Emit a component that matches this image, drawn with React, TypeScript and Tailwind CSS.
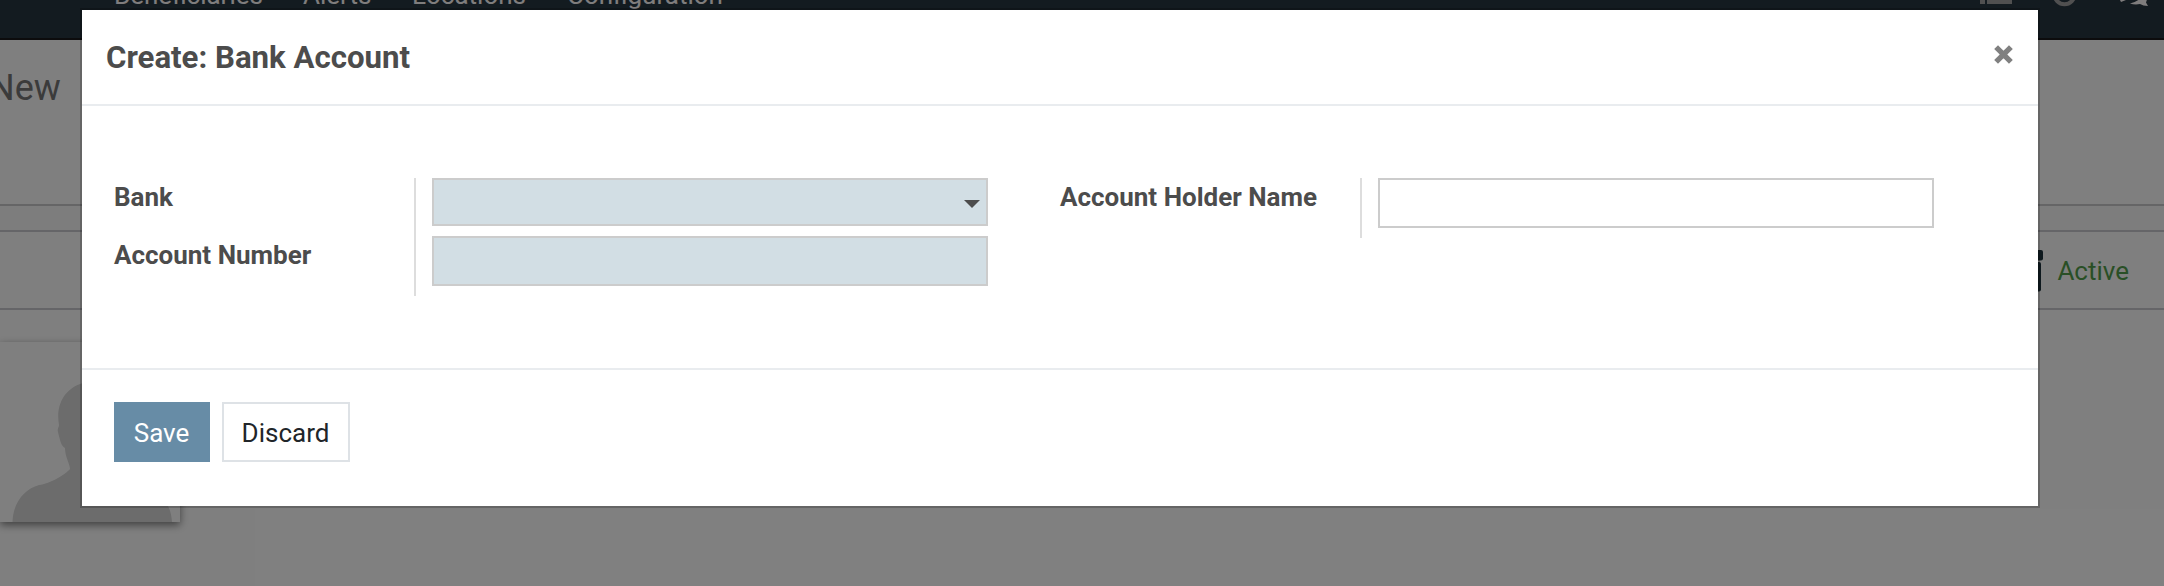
import type { ReactNode } from "react";

const menu = [
  { label: "Beneficiaries", cls: "w-[189px]" },
  { label: "Alerts", cls: "w-[109px]" },
  { label: "Locations", cls: "w-[155px]" },
  { label: "Configuration", cls: "w-[170px]" },
];

function NavBar() {
  return (
    <nav className="flex h-10 shrink-0 items-start justify-between border-b-2 border-[#18191b] bg-[#263640] pl-[114px] text-[26px] leading-[30px] text-[#fffafa]">
      <div className="-mt-5 flex">
        {menu.map((m) => (
          <span key={m.label} className={m.cls}>{m.label}</span>
        ))}
      </div>
      <svg className="h-10 w-[194px] shrink-0" viewBox="0 0 194 40">
        <path d="M10 0h5v4h-5zM17 0h25v4H17z" fill="#a0a0a0" />
        <circle cx="94.5" cy="-6" r="10.2" fill="none" stroke="#a0a0a0" strokeWidth="4" />
        <path d="M150 0h6l-5 2zM160 3.5q5-1 9-4h8l-1 3 2 3.5q-5 0-8-2-5 1-10-.5z" fill="#fffafa" />
      </svg>
    </nav>
  );
}

function Background() {
  return (
    <div className="flex h-full flex-col overflow-hidden bg-white">
      <NavBar />
      <div className="h-[166px] shrink-0 overflow-hidden border-b-2 border-[#cacacc] pt-[27px] text-[36px] leading-[42px] text-[#777777]">
        <div className="-ml-[11px]">New</div>
      </div>
      <div className="h-6 shrink-0 bg-[#fafafa]" />
      <div className="flex h-20 shrink-0 items-center justify-end border-y-2 border-[#cacad0] pt-0.5 pr-[35px]">
        <svg className="mr-[14px] h-[42px] w-[46px]" viewBox="0 0 46 42">
          <rect x="0" y="0" width="46" height="10.5" rx="2" fill="#1c323d" />
          <rect x="2" y="12" width="42" height="29.5" rx="2" fill="#1c323d" />
        </svg>
        <span className="text-[26px] leading-[30px] text-[#539f4c]">Active</span>
      </div>
      <div className="mt-8 h-[180px] w-[180px] shrink-0 bg-white shadow-[0_3px_8px_rgba(0,0,0,0.5)]">
        <svg className="h-full w-full" viewBox="0 0 180 180">
          <path
            d="M12.5 180C13 160 25 147 39 143C50 142 66 132 70 127C70 122 65 115 65 106C61 104 60 98 58 90C57 87 59 85 59 83C55 60 67 42 92 39C118 40 126 60 121 83C124 90 120 98 116 106C116 115 112 121 112 127C118 136 133 140 143 143C158 147 171 160 172 180Z"
            fill="#d8d8d8"
          />
        </svg>
      </div>
    </div>
  );
}

function Group({ children, className }: { children: ReactNode; className: string }) {
  return <div className={`grid grid-cols-[300px_574px] ${className}`}>{children}</div>;
}

function Label({ children }: { children: ReactNode }) {
  return <label className="pt-1 text-[26px] leading-[30px] font-bold">{children}</label>;
}

export default function App() {
  return (
    <div className="relative h-[586px] w-[2164px] overflow-hidden font-['Roboto',sans-serif] text-[#4c4c4c]">
      <Background />
      <div className="absolute inset-0 flex items-start bg-black/50 pt-2 pl-20">
        <section role="dialog" className="w-[1960px] border-2 border-black/20 bg-white bg-clip-padding">
          <header className="flex h-24 items-start justify-between border-b-2 border-[#e9ecef] pt-[30px] pr-[25px] pl-6">
            <h4 className="text-[31.2px] leading-9 font-bold">Create: Bank Account</h4>
            <button aria-label="Close" className="mt-[5px]">
              <svg className="h-[19px] w-[19px]" viewBox="0 0 19 19">
                <path d="M2.1 2.1L16.9 16.9M16.9 2.1L2.1 16.9" stroke="#808080" strokeWidth="5.4" />
              </svg>
            </button>
          </header>
          <main className="flex h-[262px] items-start gap-[72px] pt-[72px] pl-8">
            <Group className="h-[118px] grid-rows-[58px_60px]">
              <Label>Bank</Label>
              <div className="border-l-2 border-[#dddddd] pl-4">
                <div className="flex h-12 items-center justify-end border-2 border-[#cccccc] bg-[#d2dee4] pt-1 pr-[6px]">
                  <svg className="h-2 w-4" viewBox="0 0 16 8">
                    <path d="M0 0H16L8 8Z" fill="#4c4c4c" />
                  </svg>
                </div>
              </div>
              <Label>Account Number</Label>
              <div className="border-l-2 border-[#dddddd] pl-4">
                <input aria-label="Account Number" className="block h-[50px] w-full border-2 border-[#cccccc] bg-[#d2dee4]" />
              </div>
            </Group>
            <Group className="h-[60px]">
              <Label>Account Holder Name</Label>
              <div className="border-l-2 border-[#dddddd] pl-4">
                <input aria-label="Account Holder Name" className="block h-[50px] w-full border-2 border-[#cccccc] bg-white" />
              </div>
            </Group>
          </main>
          <footer className="flex h-[138px] items-start gap-3 border-t-2 border-[#e9ecef] pt-8 pl-8 text-[26px] leading-[30px]">
            <button className="h-[60px] w-24 bg-[#678ca6] pt-0.5 pr-px text-white">Save</button>
            <button className="h-[60px] w-32 border-2 border-[#dee2e6] bg-white pt-0.5 pr-px text-[#212529]">Discard</button>
          </footer>
        </section>
      </div>
    </div>
  );
}
